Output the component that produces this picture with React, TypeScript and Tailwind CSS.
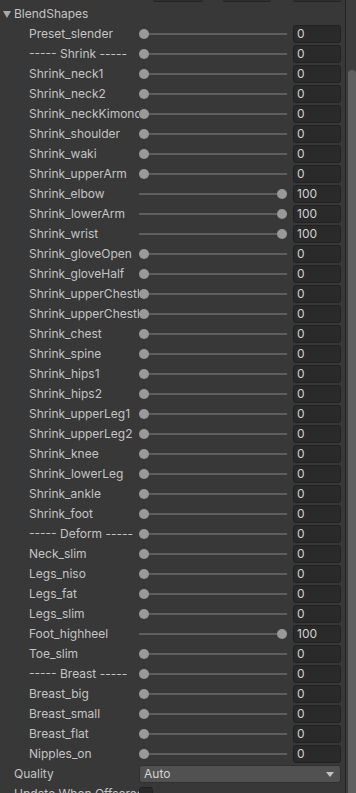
const blendShapes: [string, number][] = [
  ['Preset_slender', 0],
  ['----- Shrink -----', 0],
  ['Shrink_neck1', 0],
  ['Shrink_neck2', 0],
  ['Shrink_neckKimono', 0],
  ['Shrink_shoulder', 0],
  ['Shrink_waki', 0],
  ['Shrink_upperArm', 0],
  ['Shrink_elbow', 100],
  ['Shrink_lowerArm', 100],
  ['Shrink_wrist', 100],
  ['Shrink_gloveOpen', 0],
  ['Shrink_gloveHalf', 0],
  ['Shrink_upperChestl', 0],
  ['Shrink_upperChestl', 0],
  ['Shrink_chest', 0],
  ['Shrink_spine', 0],
  ['Shrink_hips1', 0],
  ['Shrink_hips2', 0],
  ['Shrink_upperLeg1', 0],
  ['Shrink_upperLeg2', 0],
  ['Shrink_knee', 0],
  ['Shrink_lowerLeg', 0],
  ['Shrink_ankle', 0],
  ['Shrink_foot', 0],
  ['----- Deform -----', 0],
  ['Neck_slim', 0],
  ['Legs_niso', 0],
  ['Legs_fat', 0],
  ['Legs_slim', 0],
  ['Foot_highheel', 100],
  ['Toe_slim', 0],
  ['----- Breast -----', 0],
  ['Breast_big', 0],
  ['Breast_small', 0],
  ['Breast_flat', 0],
  ['Nipples_on', 0],
]

function Slider({ value }: { value: number }) {
  return (
    <div className="relative h-[20px] w-[148px] shrink-0">
      <div className="absolute left-0 right-0 top-[9px] h-[2px] bg-[#5e5e5e]" />
      <div
        className="absolute top-[5px] h-[10px] w-[10px] rounded-full bg-[#999999]"
        style={{ left: `${(value / 100) * 138}px` }}
      />
    </div>
  )
}

function BlendShapeRow({ label, value }: { label: string; value: number }) {
  return (
    <div className="flex h-[20px] items-center">
      <div className="w-[139px] shrink-0 overflow-hidden whitespace-nowrap pl-[29px]">{label}</div>
      <Slider value={value} />
      <div className="ml-[6px] flex h-[18px] w-[48px] items-center rounded-[3px] border border-[#212121] bg-[#2a2a2a] pl-[3px] text-[#d2d2d2]">
        {value}
      </div>
    </div>
  )
}

export default function App() {
  return (
    <div
      className="flex h-[793px] w-[356px] overflow-hidden bg-[#383838] text-[12px] text-[#c4c4c4]"
      style={{ fontFamily: 'Inter, "Noto Sans", sans-serif' }}
    >
      <div className="w-[345px] shrink-0">
        <div className="flex h-[4px] items-start">
          <div className="ml-[153px] h-[2px] w-[50px] rounded-b-[3px] border-b border-[#232323] bg-[#2f2f2f]" />
          <div className="ml-[20px] h-[2px] w-[48px] rounded-b-[3px] border-b border-[#232323] bg-[#2f2f2f]" />
          <div className="ml-[22px] h-[2px] w-[48px] rounded-b-[3px] border-b border-[#232323] bg-[#2f2f2f]" />
        </div>

        <div className="flex h-[20px] items-center">
          <svg className="ml-[3px] h-[7px] w-[8px]" viewBox="0 0 8 7">
            <polygon points="0,0 8,0 4,7" fill="#a9a9a9" />
          </svg>
          <span className="ml-[3px]">BlendShapes</span>
        </div>

        {blendShapes.map(([label, value], i) => (
          <BlendShapeRow key={i} label={label} value={value} />
        ))}

        <div className="flex h-[20px] items-center">
          <div className="w-[139px] shrink-0 pl-[14px]">Quality</div>
          <div className="flex h-[18px] w-[202px] items-center justify-between rounded-[3px] border border-[#303030] bg-[#515151] pl-[4px] pr-[6px] text-[#d4d4d4]">
            <span>Auto</span>
            <svg className="h-[5px] w-[8px]" viewBox="0 0 8 5">
              <polygon points="0,0 8,0 4,5" fill="#c4c4c4" />
            </svg>
          </div>
        </div>

        <div className="flex h-[20px] items-center">
          <div className="w-[139px] shrink-0 overflow-hidden whitespace-nowrap pl-[14px]">Update When Offscreen</div>
          <div className="h-[14px] w-[14px] rounded-[3px] border border-[#212121] bg-[#2a2a2a]" />
        </div>
      </div>

      <div className="flex w-[11px] shrink-0 flex-col border-l border-[#232323] bg-[#3d3d3d] pl-[2px]">
        <div className="mt-[70px] flex-1 rounded-t-[4px] bg-[#5f5f5f]" />
      </div>
    </div>
  )
}
